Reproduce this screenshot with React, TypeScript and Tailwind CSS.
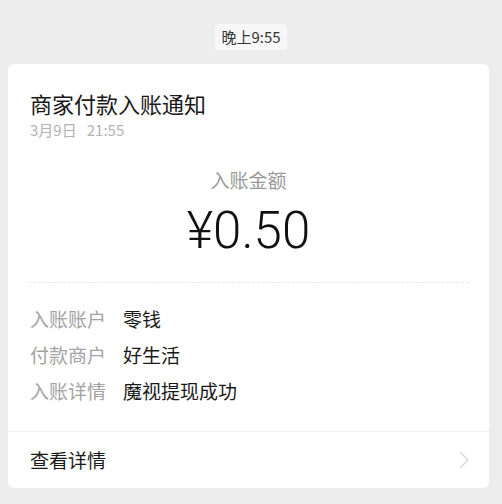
import React from "react";

const font = { fontFamily: '"Noto Sans CJK SC", "Noto Sans", sans-serif' };

export default function App() {
  return (
    <div className="w-[502px] h-[504px] bg-[#ededed] overflow-hidden" style={font}>
      <div className="flex justify-center pt-[24px]">
        <div className="bg-[#f7f7f7] text-[#353535] text-[15px] leading-[26px] px-[6px] rounded-[3px]">
          晚上9:55
        </div>
      </div>
      <div className="mx-[8px] mt-[14px] bg-white rounded-[6px] w-[481px]">
        <div className="px-[22px] pt-[25px]">
          <div className="text-[22px] leading-[28px] text-[#191919]">商家付款入账通知</div>
          <div className="text-[15px] leading-[20px] text-[#b2b2b2] mt-[3px]">3月9日&nbsp;&nbsp;&nbsp;21:55</div>
        </div>
        <div className="flex flex-col items-center mt-[28px]">
          <div className="text-[19px] leading-[24px] text-[#9a9a9a]">入账金额</div>
          <div className="text-[51px] leading-[56px] text-[#111] font-light mt-[11px] font-['Roboto',sans-serif]">¥0.50</div>
        </div>
        <div className="mx-[20px] mt-[23px] border-t border-dashed border-[#e8e8e8]"></div>
        <div className="px-[22px] pt-[24px] pb-[28px] flex flex-col gap-[12px]">
          {[
            ["入账账户", "零钱"],
            ["付款商户", "好生活"],
            ["入账详情", "魔视提现成功"],
          ].map(([k, v]) => (
            <div key={k} className="flex text-[19px] leading-[24px]">
              <span className="w-[93px] text-[#a3a3a3]">{k}</span>
              <span className="text-[#191919]">{v}</span>
            </div>
          ))}
        </div>
        <div className="border-t border-[#efefef] h-[57px] flex items-center justify-between pl-[22px] pr-[20px]">
          <span className="text-[19px] text-[#191919]">查看详情</span>
          <svg width="10" height="18" viewBox="0 0 10 18" fill="none">
            <path d="M1 1l8 8-8 8" stroke="#dcdcdc" strokeWidth="1.5" />
          </svg>
        </div>
      </div>
    </div>
  );
}
